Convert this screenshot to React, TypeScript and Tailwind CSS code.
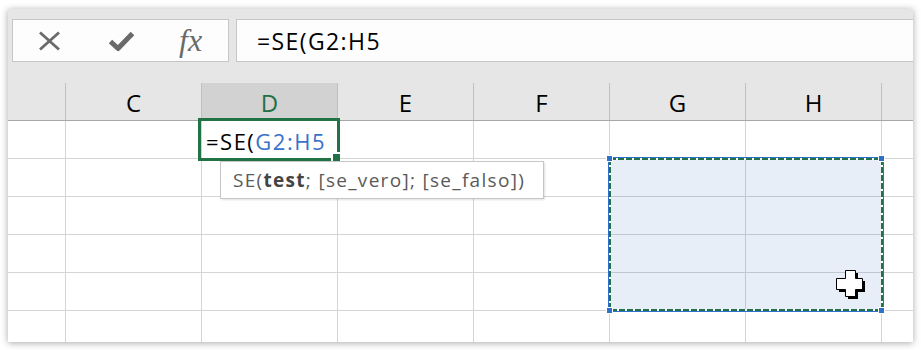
import React from "react";

const cols = ["C", "D", "E", "F", "G", "H"];

function Row({ children }: { children?: React.ReactNode }) {
  return (
    <div className="flex h-[38px] shrink-0 border-b border-[#d4d4d4]">
      <div className="w-[58px] shrink-0 border-r border-[#d4d4d4]" />
      {cols.map((c) => (
        <div key={c} className="w-[136px] shrink-0 border-r border-[#d4d4d4]">
          {c === "D" ? children : null}
        </div>
      ))}
      <div className="flex-1" />
    </div>
  );
}

export default function App() {
  return (
    <div className="w-[921px] h-[350px] bg-white pt-[9px] pl-[8px] font-['Open_Sans',sans-serif]">
      <div className="relative w-[905px] h-[333px] overflow-hidden bg-white shadow-[0_1px_7px_rgba(0,0,0,0.35)]">
        {/* formula bar area */}
        <div className="bg-[#e6e6e6] h-[74px] pt-[10px] pl-[4px] flex">
          <div className="h-[43px] w-[217px] border border-[#c6c6c6] bg-[#fdfdfd] flex items-center pl-[25px]">
            <svg width="23" height="20" viewBox="0 0 23 20">
              <path d="M2 1.5 L21 18.5 M21 1.5 L2 18.5" stroke="#6a6a6a" strokeWidth="2.8" fill="none" />
            </svg>
            <svg className="ml-[47px]" width="27" height="22" viewBox="0 0 27 22">
              <path d="M2.5 11.5 L10 18.5 L24.5 3.5" stroke="#6a6a6a" strokeWidth="5" fill="none" strokeLinejoin="round" />
            </svg>
            <span className="ml-[44px] font-['Liberation_Serif',serif] italic text-[32px] leading-none text-[#6a6a6a] -mt-[2px]">
              fx
            </span>
          </div>
          <div className="ml-[7px] flex-1 h-[43px] border border-r-0 border-[#c6c6c6] bg-[#fdfdfd] pl-[20px] pt-[2px] flex items-center text-[23px] tracking-[1.4px] text-black">
            =SE(G2:H5
          </div>
        </div>
        {/* column headers */}
        <div className="flex h-[38px] bg-[#e6e6e6] border-b border-[#a8a8a8]">
          <div className="w-[58px] shrink-0 border-r border-[#c0c0c0]" />
          {cols.map((c) => (
            <div
              key={c}
              className={
                c === "D"
                  ? "w-[136px] shrink-0 border-r border-[#c0c0c0] bg-[#d2d2d2] flex items-center justify-center pt-[3px] text-[24px] text-[#1e7145]"
                  : "w-[136px] shrink-0 border-r border-[#c0c0c0] flex items-center justify-center pt-[3px] text-[24px] text-black"
              }
            >
              {c}
            </div>
          ))}
          <div className="flex-1" />
        </div>
        {/* grid */}
        <Row>
          <div className="h-full flex items-center pl-[4px] pt-[3px] text-[22px] tracking-[1.5px] text-black">
            =SE(<span className="text-[#3a72c9]">G2:H5</span>
          </div>
        </Row>
        <Row />
        <Row />
        <Row />
        <Row />
        <Row />

        {/* active cell border */}
        <div className="absolute left-[190px] top-[109px] w-[142px] h-[43px] border-[3px] border-[#217346]" />
        <div className="absolute left-[323px] top-[143px] w-[9px] h-[9px] bg-[#217346] border-l-[2px] border-t-[2px] border-white" />

        {/* tooltip */}
        <div className="absolute left-[212px] top-[152px] w-[324px] h-[38px] bg-white border border-[#c6c6c6] shadow-[1px_1px_2px_rgba(0,0,0,0.12)] flex items-center pl-[12px] pt-[1px] text-[19px] tracking-[1.3px] text-[#5a5a5a] whitespace-nowrap">
          SE(<span className="font-bold text-[#444444]">test</span>; [se_vero]; [se_falso])
        </div>

        {/* range selection */}
        <div className="absolute left-[600px] top-[148px] w-[276px] h-[155px]">
          <div className="absolute inset-[3px] bg-[rgba(25,85,185,0.1)]" />
          <svg className="absolute inset-0" width="276" height="155" viewBox="0 0 276 155">
            <rect x="0.5" y="0.5" width="275" height="154" fill="none" stroke="#2f6fcc" strokeWidth="1" />
            <rect x="2" y="2" width="272" height="151" fill="none" stroke="#ffffff" strokeWidth="2" />
            <rect x="2" y="2" width="272" height="151" fill="none" stroke="#217346" strokeWidth="2" strokeDasharray="6 2" />
          </svg>
        </div>
        <div className="absolute left-[598px] top-[146px] w-[7px] h-[7px] bg-[#2f6fcc] border border-white" />
        <div className="absolute left-[870px] top-[146px] w-[7px] h-[7px] bg-[#2f6fcc] border border-white" />
        <div className="absolute left-[598px] top-[298px] w-[7px] h-[7px] bg-[#2f6fcc] border border-white" />
        <div className="absolute left-[870px] top-[298px] w-[7px] h-[7px] bg-[#2f6fcc] border border-white" />

        {/* cursor */}
        <svg className="absolute left-[828px] top-[261px]" width="30" height="29" viewBox="0 0 30 29">
          <path d="M12 3 H22 V11 H29 V22 H22 V29 H12 V22 H3 V11 H12 Z" fill="#000" />
          <path d="M9.5 0.5 H19.5 V8.5 H26.5 V19.5 H19.5 V26.5 H9.5 V19.5 H0.5 V8.5 H9.5 Z" fill="#fff" stroke="#000" strokeWidth="1" />
        </svg>
      </div>
    </div>
  );
}
